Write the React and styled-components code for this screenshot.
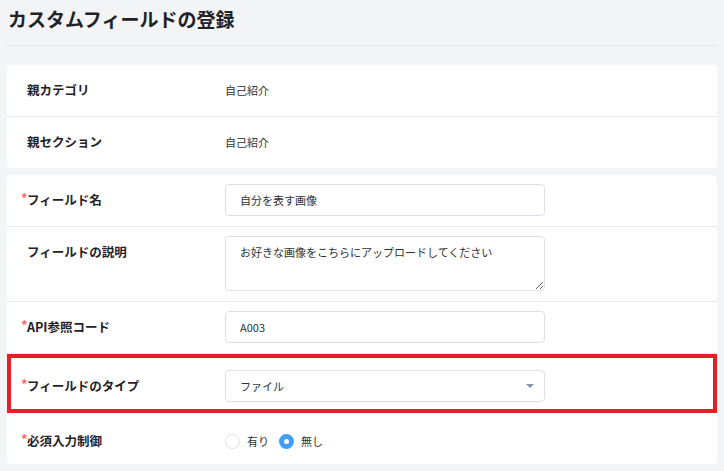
import styled, {createGlobalStyle} from 'styled-components';

const GlobalStyle = createGlobalStyle`
    body {
        margin: 0;
        background: #f3f4f6;
        font-family: "Noto Sans CJK JP", "Noto Sans", sans-serif;
        color: #1f2329;
    }
`;

const Page = styled.div`
    padding: 5px 7px 0;
`;

const Title = styled.h1`
    margin: 0 0 0 1px;
    font-size: 19px;
    line-height: 27px;
    font-weight: 700;
    color: #1f2329;
`;

const Divider = styled.hr`
    margin: 13px 0 19px;
    border: none;
    border-top: 1px solid #e1e4e8;
    height: 0;
`;

const Card = styled.section`
    background: #fff;
    border-radius: 4px;
    margin-bottom: 7px;
    overflow: hidden;
`;

const Row = styled.div`
    display: flex;
    align-items: flex-start;
    padding: ${p => p.$low ? '12px 20px 7px' : '9px 20px 10px'};
    border-bottom: 1px solid #e6e8eb;

    ${p => p.$highlight && `
        border: 4px solid #e61e25;
        padding-left: 16px;
        padding-right: 16px;
    `}

    &:last-child {
        border-bottom: ${p => p.$highlight ? '4px solid #e61e25' : 'none'};
    }
`;

const Label = styled.div`
    width: 198px;
    flex-shrink: 0;
    font-size: 12.5px;
    font-weight: 700;
    line-height: 32px;
    color: #1f2329;
`;

const Required = styled.span`
    display: inline-block;
    width: 6px;
    margin-left: -6px;
    color: #f56c6c;
    font-size: 13px;
    font-weight: 700;
    line-height: 1;
    vertical-align: 2px;
`;

const Value = styled.div`
    font-size: 11px;
    line-height: 32px;
    color: #303133;
`;

const fieldBase = `
    box-sizing: border-box;
    width: 320px;
    border: 1px solid #dcdfe6;
    border-radius: 4px;
    background: #fff;
    font-family: "Noto Sans CJK JP", "Noto Sans", sans-serif;
    font-size: 11px;
    color: #303133;
    padding: 0 14px;
    outline: none;
`;

const TextInput = styled.input`
    ${fieldBase}
    height: 32px;
`;

const TextArea = styled.textarea`
    ${fieldBase}
    display: block;
    height: 55px;
    padding-top: 6px;
    line-height: 18px;
    resize: vertical;
`;

const SelectBox = styled.div`
    ${fieldBase}
    height: 32px;
    display: flex;
    align-items: center;
    justify-content: space-between;
    padding-right: 10px;
`;

const Caret = styled.span`
    width: 0;
    height: 0;
    border-left: 4px solid transparent;
    border-right: 4px solid transparent;
    border-top: 4px solid #8a94a6;
`;

const RadioGroup = styled.div`
    display: flex;
    align-items: center;
    height: 32px;
    gap: 10px;
`;

const RadioOption = styled.label`
    display: flex;
    align-items: center;
    gap: 7px;
    font-size: 11px;
    color: #303133;
`;

const RadioDot = styled.span`
    box-sizing: border-box;
    width: 15px;
    height: 15px;
    border-radius: 50%;
    background: #fff;
    border: ${p => p.$checked ? '5px solid #409eff' : '1px solid #dcdfe6'};
`;

const Field = ({label, required}) => (
    <Label>
        {required && <Required>*</Required>}
        {label}
    </Label>
);

export default function App() {
    return (
        <Page>
            <GlobalStyle/>
            <Title>カスタムフィールドの登録</Title>
            <Divider/>

            <Card>
                <Row>
                    <Field label="親カテゴリ"/>
                    <Value>自己紹介</Value>
                </Row>
                <Row>
                    <Field label="親セクション"/>
                    <Value>自己紹介</Value>
                </Row>
            </Card>

            <Card>
                <Row>
                    <Field label="フィールド名" required/>
                    <TextInput defaultValue="自分を表す画像"/>
                </Row>
                <Row>
                    <Field label="フィールドの説明"/>
                    <TextArea defaultValue="お好きな画像をこちらにアップロードしてください"/>
                </Row>
                <Row>
                    <Field label="API参照コード" required/>
                    <TextInput defaultValue="A003"/>
                </Row>
                <Row $highlight $low>
                    <Field label="フィールドのタイプ" required/>
                    <SelectBox>
                        <span>ファイル</span>
                        <Caret/>
                    </SelectBox>
                </Row>
                <Row $low>
                    <Field label="必須入力制御" required/>
                    <RadioGroup>
                        <RadioOption><RadioDot/>有り</RadioOption>
                        <RadioOption><RadioDot $checked/>無し</RadioOption>
                    </RadioGroup>
                </Row>
            </Card>
        </Page>
    );
}
